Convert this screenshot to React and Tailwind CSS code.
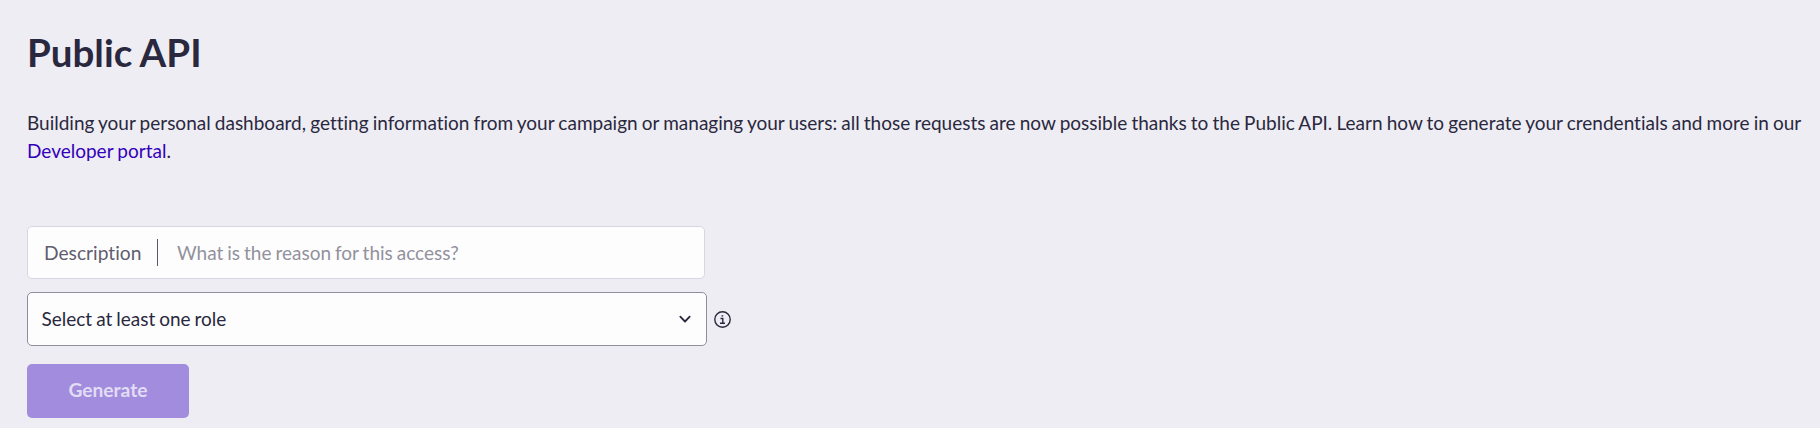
import React from 'react';

const PublicApi = () => {
  return (
    <div className="h-[428px] overflow-hidden bg-[#eeedf3] px-[27px] pt-[28px] font-['Lato',sans-serif] text-[#2a283e] [font-variant-ligatures:none] [word-spacing:-0.73px]">
      <h1 className="text-[38.5px] leading-[48px] font-bold">Public API</h1>

      <p className="mt-[33px] text-[19px] leading-[28px] whitespace-nowrap">
        Building your personal dashboard, getting information from your campaign or managing your users: all those requests are now possible thanks to the Public API. Learn how to generate your crendentials and more in our
        <br />
        <a href="#" className="text-[#3300bb]">Developer portal</a>.
      </p>

      <form className="mt-[61px]">
        <label className="flex h-[53px] w-[678px] items-center rounded-[5px] border border-[#d8d6e4] bg-[#fdfdfd] px-[16px] text-[19px]">
          <span className="w-[114px] border-r border-[#5a5868] text-[19.2px] leading-[27px] text-[#5f5d6e]">Description</span>
          <input
            type="text"
            placeholder="What is the reason for this access?"
            className="ml-[19px] flex-1 pt-px outline-none [word-spacing:-0.9px] placeholder:text-[#92919d]"
          />
        </label>

        <div className="mt-[13px] flex items-center">
          <button type="button" className="flex h-[54px] w-[680px] items-center justify-between rounded-[5px] border border-[#8f8da0] bg-[#fdfdfd] pr-[15px] pl-[13.5px] text-[19px] [word-spacing:-0.9px]">
            Select at least one role
            <svg width="12" height="8" viewBox="0 0 12 8" fill="none" stroke="currentColor" strokeWidth="1.8" strokeLinecap="round" strokeLinejoin="round">
              <path d="M1.300 1.700L6 6.500l4.700-4.800" />
            </svg>
          </button>
          <svg className="ml-[7px]" width="17" height="17" viewBox="0 0 17 17" fill="none" stroke="currentColor" strokeWidth="1.4">
            <circle cx="8.500" cy="8.500" r="7.700" />
            <path d="M6.500 7.500h2.300v4.500M6 12.200h5M7.500 4.900h1.700" />
          </svg>
        </div>

        <button type="button" className="mt-[18px] h-[54px] w-[162px] rounded-[5px] bg-[#a18cdd] pb-0.5 text-[19.2px] font-bold text-[#e3dcf5]">
          Generate
        </button>
      </form>
    </div>
  );
};

export default PublicApi;
